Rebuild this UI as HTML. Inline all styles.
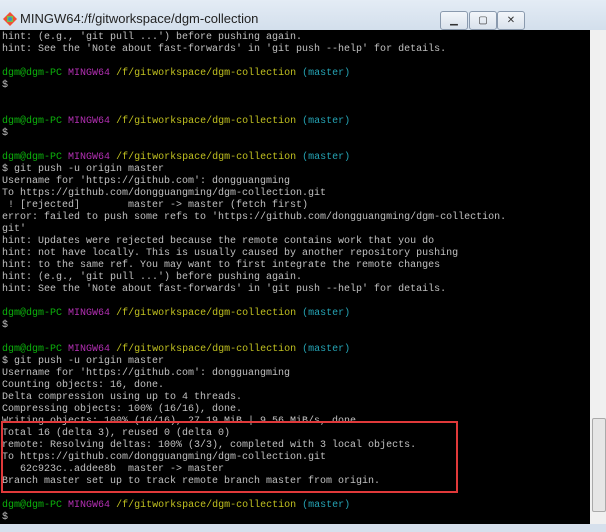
<!DOCTYPE html>
<html><head><style>
body{margin:0;width:606px;height:532px;overflow:hidden;background:#d6e0ec;position:relative;font-family:"Liberation Sans",sans-serif}
.title{position:absolute;left:0;top:0;width:606px;height:30px;background:linear-gradient(#e4ecf5,#d3dfec);}
.title span{position:absolute;left:20px;top:11px;font-size:13px;color:#222}
.btn{position:absolute;top:11px;height:17px;border:1px solid #8a9aae;border-radius:3px;background:linear-gradient(#f3f6fa,#d9e2ec);font-size:10px;text-align:center;line-height:17px;color:#333}
.term{position:absolute;left:0;top:30px;width:590px;height:494px;background:#000;overflow:hidden}
pre{margin:0;padding:2px 0 0 2px;font-family:"Liberation Mono",monospace;font-size:10px;line-height:12px;color:#c0c0c0}
.g{color:#0cb30c}.m{color:#b32fb3}.y{color:#c0c020}.c{color:#25a4b5}
.sb{position:absolute;left:590px;top:30px;width:16px;height:494px;background:#f0f0f0}
.thumb{position:absolute;left:592px;top:418px;width:12px;height:92px;background:#e6e6e6;border:1px solid #aaa;border-radius:2px}
.box{position:absolute;left:1px;top:421px;width:453px;height:68px;border:2px solid #e0393a}
.bot{position:absolute;left:0;top:524px;width:606px;height:8px;background:#d6e0ec}
</style></head><body>
<div class="title">
<svg style="position:absolute;left:3px;top:12px" width="14" height="14"><polygon points="7,0 14,7 7,14 0,7" fill="#f05033"/><rect x="4" y="4" width="6" height="6" fill="#7ac143"/><circle cx="7" cy="7" r="2" fill="#3c8dd1"/></svg>
<span>MINGW64:/f/gitworkspace/dgm-collection</span>
<div class="btn" style="left:440px;width:26px">▁</div>
<div class="btn" style="left:469px;width:26px">▢</div>
<div class="btn" style="left:497px;width:26px">✕</div>
</div>
<div class="term"><pre>hint: (e.g., 'git pull ...') before pushing again.
hint: See the 'Note about fast-forwards' in 'git push --help' for details.

<span class="g">dgm@dgm-PC</span> <span class="m">MINGW64</span> <span class="y">/f/gitworkspace/dgm-collection</span> <span class="c">(master)</span>
$


<span class="g">dgm@dgm-PC</span> <span class="m">MINGW64</span> <span class="y">/f/gitworkspace/dgm-collection</span> <span class="c">(master)</span>
$

<span class="g">dgm@dgm-PC</span> <span class="m">MINGW64</span> <span class="y">/f/gitworkspace/dgm-collection</span> <span class="c">(master)</span>
$ git push -u origin master
Username for 'https://github.com': dongguangming
To https://github.com/dongguangming/dgm-collection.git
 ! [rejected]        master -> master (fetch first)
error: failed to push some refs to 'https://github.com/dongguangming/dgm-collection.
git'
hint: Updates were rejected because the remote contains work that you do
hint: not have locally. This is usually caused by another repository pushing
hint: to the same ref. You may want to first integrate the remote changes
hint: (e.g., 'git pull ...') before pushing again.
hint: See the 'Note about fast-forwards' in 'git push --help' for details.

<span class="g">dgm@dgm-PC</span> <span class="m">MINGW64</span> <span class="y">/f/gitworkspace/dgm-collection</span> <span class="c">(master)</span>
$

<span class="g">dgm@dgm-PC</span> <span class="m">MINGW64</span> <span class="y">/f/gitworkspace/dgm-collection</span> <span class="c">(master)</span>
$ git push -u origin master
Username for 'https://github.com': dongguangming
Counting objects: 16, done.
Delta compression using up to 4 threads.
Compressing objects: 100% (16/16), done.
Writing objects: 100% (16/16), 27.19 MiB | 9.56 MiB/s, done.
Total 16 (delta 3), reused 0 (delta 0)
remote: Resolving deltas: 100% (3/3), completed with 3 local objects.
To https://github.com/dongguangming/dgm-collection.git
   62c923c..addee8b  master -> master
Branch master set up to track remote branch master from origin.

<span class="g">dgm@dgm-PC</span> <span class="m">MINGW64</span> <span class="y">/f/gitworkspace/dgm-collection</span> <span class="c">(master)</span>
$</pre></div>
<div class="box"></div>
<div class="sb"></div><div class="thumb"></div>
<div class="bot"></div>
</body></html>
